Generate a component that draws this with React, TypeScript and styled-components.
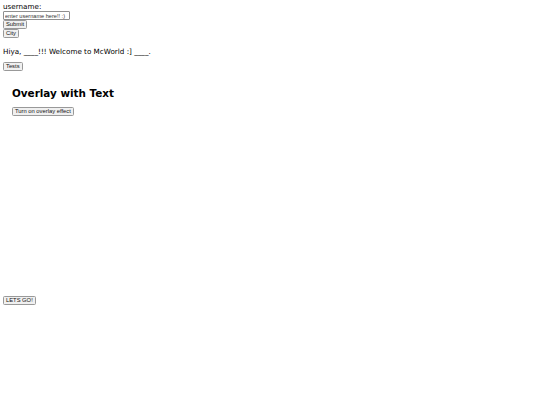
import { createGlobalStyle } from 'styled-components';
import styled from 'styled-components';

// Page-wide reset: the shot is a scaled-down page, so sizes are small
const GlobalStyle = createGlobalStyle`
body {
  margin: 3px;
  font-family: "DejaVu Sans", Verdana, sans-serif;
  font-size: 7.2px;
  color: #000;
  background: #fff;
}
`;

const UserForm = styled.form`
display: flex;
flex-direction: column;
align-items: flex-start;
`;

const FieldLabel = styled.label`
height: 8px;
line-height: 8px;
`;

const NameInput = styled.input`
box-sizing: border-box;
width: 67px;
height: 9px;
margin: 0;
padding: 0 1px;
border: 1px solid #8f8f8f;
border-radius: 1px;
font-family: "Liberation Sans", Arial, sans-serif;
font-size: 5.6px;
color: #000;
&::placeholder {
  color: #333;
}
`;

const PlainButton = styled.button`
box-sizing: border-box;
height: 9px;
margin: 0;
padding: 0 2px;
border: 1px solid #999;
border-radius: 1.5px;
background: #f0f0f0;
font-family: "Liberation Sans", Arial, sans-serif;
font-size: 5.8px;
line-height: 7px;
color: #111;
`;

const Greeting = styled.p`
margin: 9px 0 5px;
line-height: 9px;
`;

const OverlayBox = styled.div`
box-sizing: border-box;
height: 224px;
padding: 6px 9px;
`;

const OverlayTitle = styled.h2`
margin: 9px 0 6px;
font-size: 10.4px;
line-height: 14px;
font-weight: bold;
`;

// Component
export default function App() {
  return (
    <>
      <GlobalStyle />
      <UserForm onSubmit={(e) => e.preventDefault()}>
        <FieldLabel htmlFor="username">username:</FieldLabel>
        <NameInput id="username" placeholder="enter username here!! :)" />
        <PlainButton type="submit">Submit</PlainButton>
        <PlainButton type="button">City</PlainButton>
      </UserForm>
      <Greeting>Hiya, ____!!! Welcome to McWorld :] ____.</Greeting>
      <PlainButton>Tests</PlainButton>
      <OverlayBox>
        <OverlayTitle>Overlay with Text</OverlayTitle>
        <PlainButton>Turn on overlay effect</PlainButton>
      </OverlayBox>
      <PlainButton>LETS GO!</PlainButton>
    </>
  );
}
